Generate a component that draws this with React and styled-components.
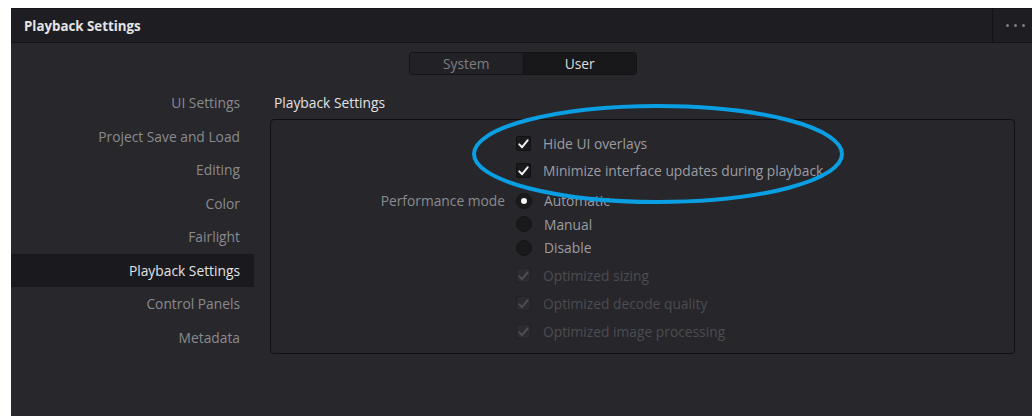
import React, { useState } from 'react';
import styled, { createGlobalStyle } from 'styled-components';

const GlobalStyle = createGlobalStyle`
  html, body {
    margin: 0;
    padding: 0;
    background: #ffffff;
    overflow: hidden;
  }
  body {
    font-family: 'Open Sans', 'Noto Sans', 'Liberation Sans', sans-serif;
    font-size: 13.8px;
  }
`;

const SECTIONS = [
  'UI Settings',
  'Project Save and Load',
  'Editing',
  'Color',
  'Fairlight',
  'Playback Settings',
  'Control Panels',
  'Metadata',
];

function App() {
  const [scope, setScope] = useState('User');
  const [active, setActive] = useState('Playback Settings');
  const [mode, setMode] = useState('Automatic');
  const [hideOverlays, setHideOverlays] = useState(true);
  const [minimizeUpdates, setMinimizeUpdates] = useState(true);

  return (
    <>
      <GlobalStyle />
      <Panel>
        <Header>
          <HeaderTitle>Playback Settings</HeaderTitle>
          <MoreButton>
            <Dot />
            <Dot />
            <Dot />
          </MoreButton>
        </Header>

        <Body>
          <ScopeSwitch>
            {['System', 'User'].map((s) => (
              <ScopeTab key={s} $active={scope === s} onClick={() => setScope(s)}>
                {s}
              </ScopeTab>
            ))}
          </ScopeSwitch>

          <Columns>
            <Sidebar>
              {SECTIONS.map((s) => (
                <SideItem key={s} $active={active === s} onClick={() => setActive(s)}>
                  {s}
                </SideItem>
              ))}
            </Sidebar>

            <Content>
              <SectionTitle>Playback Settings</SectionTitle>
              <SettingsBox>
                <Row $h={27}>
                  <RowLabel />
                  <Check checked={hideOverlays} onClick={() => setHideOverlays(!hideOverlays)}>
                    Hide UI overlays
                  </Check>
                </Row>
                <Row $h={27}>
                  <RowLabel />
                  <Check checked={minimizeUpdates} onClick={() => setMinimizeUpdates(!minimizeUpdates)}>
                    Minimize interface updates during playback
                  </Check>
                </Row>

                <RadioGroup>
                  {['Automatic', 'Manual', 'Disable'].map((m, i) => (
                    <Row key={m} $h={23.5}>
                      <RowLabel>{i === 0 ? 'Performance mode' : ''}</RowLabel>
                      <Radio selected={mode === m} onClick={() => setMode(m)}>
                        {m}
                      </Radio>
                    </Row>
                  ))}
                </RadioGroup>

                <DisabledGroup>
                  {['Optimized sizing', 'Optimized decode quality', 'Optimized image processing'].map((o) => (
                    <Row key={o} $h={28}>
                      <RowLabel />
                      <Check checked disabled>
                        {o}
                      </Check>
                    </Row>
                  ))}
                </DisabledGroup>

                <Highlight width="380" height="108" viewBox="0 0 380 108">
                  <ellipse cx="190" cy="54" rx="184" ry="48" fill="none" stroke="#0a9fe2" strokeWidth="4" />
                </Highlight>
              </SettingsBox>
            </Content>
          </Columns>
        </Body>
      </Panel>
    </>
  );
}

function Check({ checked, disabled, children, onClick }) {
  return (
    <Control $disabled={disabled} onClick={disabled ? undefined : onClick}>
      <CheckBox $disabled={disabled}>
        {checked && (
          <svg width="11" height="10" viewBox="0 0 11 10">
            <path
              d="M1.3 5.4 L4.1 8.2 L9.6 1.4"
              fill="none"
              stroke={disabled ? '#4d4d52' : '#f2f2f2'}
              strokeWidth="2"
              strokeLinecap="round"
              strokeLinejoin="round"
            />
          </svg>
        )}
      </CheckBox>
      {children}
    </Control>
  );
}

function Radio({ selected, children, onClick }) {
  return (
    <Control onClick={onClick}>
      <RadioCircle $selected={selected} />
      {children}
    </Control>
  );
}

const Panel = styled.div`
  margin: 8px 0 0 11px;
  width: 1024px;
  height: 408px;
  background: #27272c;
  display: flex;
  flex-direction: column;
`;

const Header = styled.div`
  height: 33px;
  flex: none;
  display: flex;
  align-items: stretch;
  background: #1e1e22;
  border-top: 1px solid #141417;
  border-bottom: 1px solid #131316;
`;

const HeaderTitle = styled.div`
  flex: 1;
  display: flex;
  align-items: center;
  padding-left: 13px;
  font-weight: 700;
  font-size: 13.3px;
  color: #e4e4e4;
`;

const MoreButton = styled.div`
  width: 40px;
  display: flex;
  align-items: center;
  justify-content: center;
  gap: 5px;
  border-left: 1px solid #131316;
  padding-left: 2px;
`;

const Dot = styled.span`
  width: 3px;
  height: 3px;
  border-radius: 50%;
  background: #7d7d82;
`;

const Body = styled.div`
  flex: 1;
  display: flex;
  flex-direction: column;
  padding-top: 9px;
`;

const ScopeSwitch = styled.div`
  align-self: center;
  display: flex;
  width: 228px;
  height: 23px;
  border: 1px solid #141417;
  border-radius: 3px;
  overflow: hidden;
  box-sizing: border-box;
`;

const ScopeTab = styled.div`
  flex: 1;
  display: flex;
  align-items: center;
  justify-content: center;
  font-size: 13.8px;
  cursor: pointer;
  color: ${(p) => (p.$active ? '#dedede' : '#7e7e82')};
  background: ${(p) => (p.$active ? '#18181b' : '#222226')};
  & + & {
    border-left: 1px solid #141417;
  }
`;

const Columns = styled.div`
  display: flex;
  margin-top: 11px;
`;

const Sidebar = styled.div`
  width: 243px;
  flex: none;
  display: flex;
  flex-direction: column;
`;

const SideItem = styled.div`
  height: 33.5px;
  display: flex;
  align-items: center;
  justify-content: flex-end;
  padding-right: 14px;
  font-size: 13.8px;
  cursor: pointer;
  color: ${(p) => (p.$active ? '#e2e2e2' : '#8a8a8e')};
  background: ${(p) => (p.$active ? '#1a1a1e' : 'transparent')};
`;

const Content = styled.div`
  margin-left: 16px;
  width: 745px;
  display: flex;
  flex-direction: column;
`;

const SectionTitle = styled.div`
  height: 33px;
  display: flex;
  align-items: center;
  padding-left: 4px;
  font-size: 13.8px;
  color: #e2e2e2;
`;

const SettingsBox = styled.div`
  position: relative;
  height: 235px;
  box-sizing: border-box;
  border: 1px solid #0f0f11;
  border-radius: 4px;
  background: #26262b;
  padding-top: 10px;
`;

const Row = styled.div`
  height: ${(p) => p.$h}px;
  display: grid;
  grid-template-columns: 234px 1fr;
  column-gap: 11px;
  align-items: center;
`;

const RowLabel = styled.div`
  text-align: right;
  font-size: 13.8px;
  color: #8b8b8f;
`;

const RadioGroup = styled.div`
  margin-top: 5px;
`;

const DisabledGroup = styled.div`
  margin-top: 2px;
`;

const Control = styled.div`
  display: flex;
  align-items: center;
  gap: 12px;
  font-size: 13.8px;
  color: ${(p) => (p.$disabled ? '#4c4c51' : '#9c9ca0')};
  cursor: ${(p) => (p.$disabled ? 'default' : 'pointer')};
`;

const CheckBox = styled.span`
  width: 15px;
  height: 15px;
  flex: none;
  box-sizing: border-box;
  display: flex;
  align-items: center;
  justify-content: center;
  border-radius: 2px;
  background: ${(p) => (p.$disabled ? '#2b2b30' : '#1a1a1d')};
  border: 1px solid ${(p) => (p.$disabled ? '#222226' : '#111113')};
`;

const RadioCircle = styled.span`
  width: 16px;
  height: 16px;
  flex: none;
  box-sizing: border-box;
  border-radius: 50%;
  background: #1a1a1d;
  border: 1px solid #141416;
  display: flex;
  align-items: center;
  justify-content: center;
  &::after {
    content: '';
    width: 6px;
    height: 6px;
    border-radius: 50%;
    background: #f4f4f4;
    display: ${(p) => (p.$selected ? 'block' : 'none')};
  }
`;

const Highlight = styled.svg`
  position: absolute;
  left: 197px;
  top: -20px;
  pointer-events: none;
`;

export default App;
